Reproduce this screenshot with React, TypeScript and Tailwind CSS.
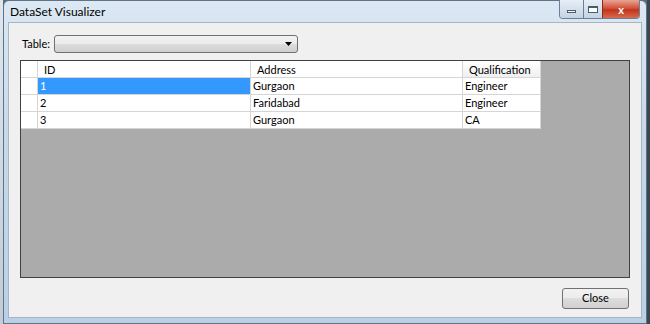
import React from 'react';

const rows = [
  { id: '1', address: 'Gurgaon', qual: 'Engineer' },
  { id: '2', address: 'Faridabad', qual: 'Engineer' },
  { id: '3', address: 'Gurgaon', qual: 'CA' },
];

export default function App() {
  return (
    <div
      className="flex h-[324px] w-[650px] overflow-hidden bg-[#5b6b7a]"
      style={{ fontFamily: 'Lato, "Liberation Sans", sans-serif' }}
    >
      {/* background strip left */}
      <div className="w-[3px] bg-[linear-gradient(#dfe6ee,#c2cbd6)]" />

      {/* window frame */}
      <div className="flex flex-1 flex-col rounded-t-[6px] border border-[#5f7587] bg-[linear-gradient(180deg,#dce8f3_0%,#c7daeb_40%,#b9d0e6_100%)]">
        {/* title bar */}
        <div className="relative flex h-[21px] items-center pl-[6px] pt-[1px]">
          <span className="text-[12px] leading-none text-black">DataSet Visualizer</span>
          <div className="absolute right-[6px] top-[-1px] flex h-[19px] overflow-hidden rounded-b-[4px] border border-t-0 border-[#6d7f92]">
            <div className="flex w-[23px] items-end justify-center bg-[linear-gradient(#e6eef6,#c4d3e2)] pb-[5px]">
              <div className="h-[3px] w-[9px] border border-[#4b5b6c] bg-white" />
            </div>
            <div className="flex w-[19px] items-center justify-center border-l border-[#6d7f92] bg-[linear-gradient(#e6eef6,#c4d3e2)]">
              <div className="h-[7px] w-[10px] border border-[#4b5b6c] border-t-2 bg-white" />
            </div>
            <div className="flex w-[37px] items-center justify-center border-l border-[#8a2b1e] bg-[linear-gradient(#e8a594,#d2523b_45%,#c2331c_55%,#d86a4e)]">
              <span className="text-[11px] font-bold leading-none text-white">x</span>
            </div>
          </div>
        </div>

        {/* client area */}
        <div className="mx-[4px] mb-[5px] flex flex-1 flex-col border border-[#a7b5c3] bg-[#f0f0f0]">
          <div className="flex items-center pl-[13px] pt-[12px]">
            <span className="w-[32px] text-[11px] text-black">Table:</span>
            <div className="flex h-[18px] w-[244px] items-center justify-end rounded-[3px] border border-[#707070] bg-[linear-gradient(#f2f2f2,#ebebeb_50%,#dddddd_50%,#cfcfcf)] pr-[5px]">
              <svg width="7" height="4" viewBox="0 0 7 4">
                <path d="M0 0h7L3.5 4z" fill="#000" />
              </svg>
            </div>
          </div>

          {/* grid */}
          <div className="ml-[11px] mr-[11px] mt-[7px] h-[218px] border border-[#404040] bg-[#ababab]">
            <div className="flex h-[17px] text-[11px] text-black">
              <div className="w-[17px] border-r border-b border-[#d5d5d5] bg-white" />
              <div className="w-[213px] border-r border-b border-[#d5d5d5] bg-white pl-[6px] leading-[17px]">ID</div>
              <div className="w-[212px] border-r border-b border-[#d5d5d5] bg-white pl-[6px] leading-[17px]">Address</div>
              <div className="w-[78px] border-r border-b border-[#d5d5d5] bg-[linear-gradient(#ffffff,#f0f0f0)] pl-[6px] leading-[17px]">Qualification</div>
            </div>
            {rows.map((r, i) => (
              <div key={r.id} className="flex h-[17px] text-[11px] text-black">
                <div className="w-[17px] border-r border-b border-[#d5d5d5] bg-white" />
                <div
                  className={
                    i === 0
                      ? 'w-[213px] border-r border-b border-[#d5d5d5] bg-[#3399ff] pl-[2px] leading-[16px] text-white'
                      : 'w-[213px] border-r border-b border-[#d5d5d5] bg-white pl-[2px] leading-[16px]'
                  }
                >
                  {r.id}
                </div>
                <div className="w-[212px] border-r border-b border-[#d5d5d5] bg-white pl-[2px] leading-[16px]">{r.address}</div>
                <div className="w-[78px] border-r border-b border-[#d5d5d5] bg-white pl-[2px] leading-[16px]">{r.qual}</div>
              </div>
            ))}
          </div>

          <div className="mt-[10px] flex justify-end pr-[12px]">
            <button className="h-[21px] w-[67px] rounded-[3px] border border-[#707070] bg-[linear-gradient(#f2f2f2,#ebebeb_50%,#dddddd_50%,#cfcfcf)] text-[11px] text-black">
              Close
            </button>
          </div>
        </div>
      </div>

      <div className="w-[3px] bg-[#3c4650]" />
    </div>
  );
}
